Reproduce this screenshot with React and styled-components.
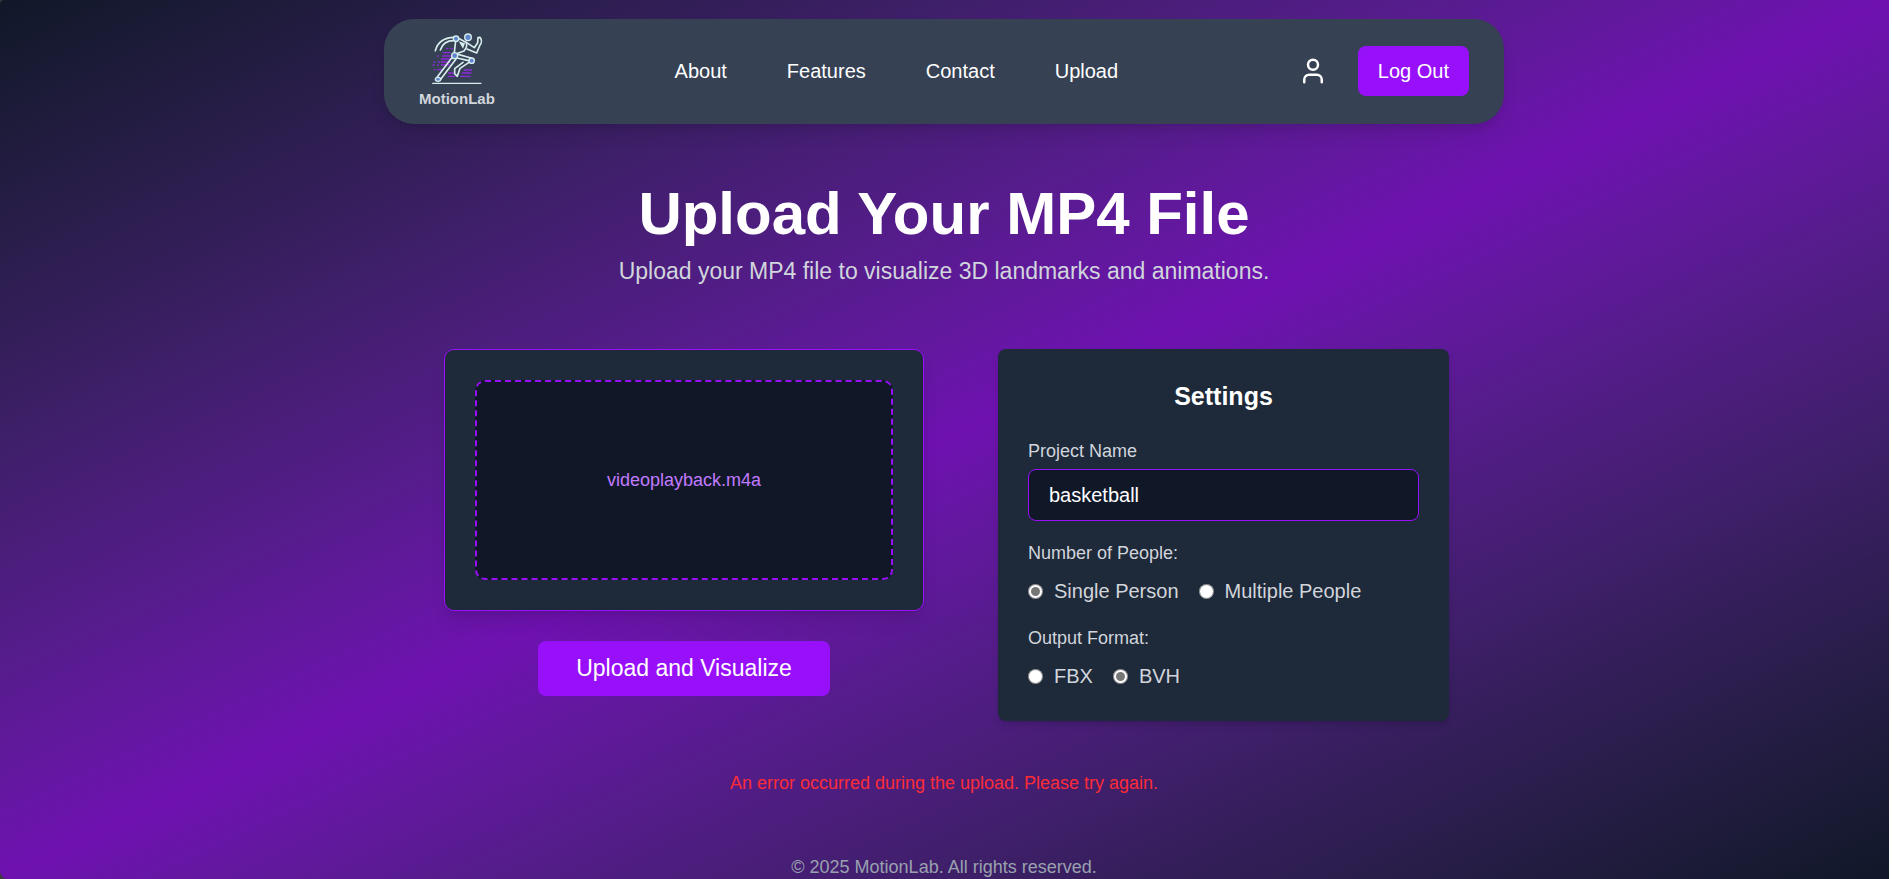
import React, { useState } from "react";
import styled, { createGlobalStyle } from "styled-components";
import { User } from "lucide-react";

const GlobalStyle = createGlobalStyle`
  *, *::before, *::after { box-sizing: border-box; }
  body {
    margin: 0;
    background: #ffffff;
    color: #ffffff;
    font-family: "Liberation Sans", Arial, sans-serif;
    font-size: 20px;
    line-height: 30px;
  }
  h1, h2, p, fieldset { margin: 0; padding: 0; border: 0; }
  button, input { font: inherit; color: inherit; }
  a { color: inherit; text-decoration: none; }
`;

const Frame = styled.div`
  margin-right: 3px;
  background: #3c3c3c;
`;

const Page = styled.div`
  display: flex;
  flex-direction: column;
  min-height: 100vh;
  padding: 19px 1px 0 0;
  border-radius: 4px 0 0 8px;
  background: linear-gradient(to bottom right in oklab, #101828, #6e11b0, #101828);
`;

const Header = styled.header`
  display: flex;
  align-items: center;
  justify-content: space-between;
  width: 100%;
  max-width: 1120px;
  height: 105px;
  margin: 0 auto;
  padding: 0 35px 1px;
  border-radius: 30px;
  background: #364153;
  box-shadow: 0 12px 18px -4px rgba(0, 0, 0, 0.1), 0 5px 8px -5px rgba(0, 0, 0, 0.1);
`;

const Brand = styled.a`
  display: flex;
  flex-direction: column;
  align-items: center;
  gap: 4px;
  color: #d1d5dc;
  font-size: 15px;
  font-weight: 700;
  line-height: 20px;
`;

const Nav = styled.nav`
  display: flex;
  gap: 60px;
`;

const Account = styled.div`
  display: flex;
  align-items: center;
  gap: 30px;
`;

const IconLink = styled.a`
  display: flex;
`;

const Button = styled.button`
  padding: ${(p) => (p.$large ? "12px 38px 13px" : "10px 20px")};
  border: 0;
  border-radius: 8px;
  background: #9810fa;
  font-size: ${(p) => (p.$large ? 23 : 20)}px;
  line-height: 30px;
  cursor: pointer;
`;

const Main = styled.main`
  width: 100%;
  max-width: 1120px;
  margin: 0 auto;
  padding-top: 60px;
`;

const Intro = styled.section`
  text-align: center;
`;

const Title = styled.h1`
  font-size: 60px;
  font-weight: 700;
  line-height: 60px;
`;

const Subtitle = styled.p`
  padding-top: 10px;
  color: #d1d5dc;
  font-size: 23px;
  line-height: 35px;
`;

const Columns = styled.form`
  display: grid;
  grid-template-columns: 5fr 4fr;
  padding: 60px 40px 0 0;
`;

const UploadColumn = styled.div`
  display: flex;
  flex-direction: column;
  align-items: center;
  gap: 30px;
`;

const DropCard = styled.div`
  width: 80%;
  padding: 30px;
  border: 1px solid #9810fa;
  border-radius: 10px;
  background: #1e2939;
  box-shadow: 0 12px 18px -4px rgba(0, 0, 0, 0.1), 0 5px 8px -5px rgba(0, 0, 0, 0.1);
`;

const DropZone = styled.label`
  display: flex;
  align-items: center;
  justify-content: center;
  height: 200px;
  border: 2px dashed #9810fa;
  border-radius: 10px;
  background: #101828;
  color: #c27aff;
  font-size: 18px;
  line-height: 25px;
  cursor: pointer;
`;

const FileInput = styled.input`
  display: none;
`;

const SettingsCard = styled.section`
  align-self: start;
  margin: 0 15px 0 14px;
  padding: 30px;
  border-radius: 8px;
  background: #1e2939;
  box-shadow: 0 5px 8px -1px rgba(0, 0, 0, 0.1), 0 3px 5px -2px rgba(0, 0, 0, 0.1);
`;

const SettingsTitle = styled.h2`
  padding-bottom: 25px;
  font-size: 25px;
  line-height: 35px;
  text-align: center;
`;

const Fields = styled.div`
  display: flex;
  flex-direction: column;
  gap: 20px;
`;

const Field = styled.div`
  color: #d1d5dc;
`;

const FieldName = styled.label`
  display: block;
  padding-bottom: 5px;
  font-size: 18px;
  line-height: 25px;
`;

const TextInput = styled.input`
  display: block;
  width: 100%;
  height: 52px;
  padding: 0 20px;
  border: 1px solid #9810fa;
  border-radius: 8px;
  outline: 0;
  background: #101828;
  color: #ffffff;
`;

const Choices = styled.div`
  display: flex;
  gap: 20px;
  padding-top: 5px;
`;

const Choice = styled.label`
  display: flex;
  align-items: center;
  gap: 11px;
`;

const Radio = styled.input`
  width: 15px;
  height: 15px;
  margin: 0;
  accent-color: #767676;
`;

const ErrorText = styled.p`
  padding-top: 50px;
  color: #fb2c36;
  font-size: 18px;
  line-height: 25px;
  text-align: center;
`;

const Footer = styled.footer`
  padding-top: 60px;
  color: #99a1af;
  font-size: 18px;
  line-height: 22px;
  text-align: center;
`;

function RunnerLogo() {
  return (
    <svg width="52" height="52" viewBox="150 68 156 156" fill="none" strokeLinecap="round" strokeLinejoin="round" aria-hidden="true">
      <g stroke="#8f2be0" strokeWidth="4">
        <path d="M197 115h4M210 115h4M187 127h20M170 137h2M185 137h24M181 146h26M159 155h2M172 155h3M181 155h26M156 164h3M170 164h2M181 164h24M160 178h2M171 178h12M250 179h22M244 188h26M203 188h14M201 198h20M239 198h28" />
      </g>
      <g stroke="#d8eeee" strokeWidth="5">
        <path d="M155 219h145" strokeWidth="4" />
        <path d="M219 81C192 82 170 94 163 121M218 91C198 91 184 100 178 119" />
        <path d="M231 83L253 95M224 92L220 126M254 94C260 102 257 112 249 122L230 129" />
        <path d="M257 97L280 112L290 97L291 82L297 81C303 88 302 98 297 104L287 128L258 116" />
        <path d="M231 132L270 143M229 143L262 151M212 143L167 202M225 146L178 208M264 156L237 174L229 198L221 190L221 175L246 156" />
      </g>
      <path d="M233 93L252 99L246 115Z" fill="#d8eeee" />
      <g fill="#5f86cf" stroke="#d8eeee" strokeWidth="4">
        <circle cx="261" cy="81" r="10" />
        <circle cx="225" cy="85" r="8" />
        <circle cx="221" cy="136" r="9" />
        <circle cx="272" cy="151" r="8" />
        <ellipse cx="171" cy="207" rx="8" ry="6" />
      </g>
    </svg>
  );
}

function RadioGroup({ title, name, options, value, onChange }) {
  return (
    <Field role="radiogroup" aria-labelledby={`${name}-title`}>
      <FieldName as="div" id={`${name}-title`}>{title}</FieldName>
      <Choices>
        {options.map((option) => (
          <Choice key={option}>
            <Radio type="radio" name={name} checked={value === option} onChange={() => onChange(option)} />
            {option}
          </Choice>
        ))}
      </Choices>
    </Field>
  );
}

export default function App() {
  const [project, setProject] = useState("basketball");
  const [people, setPeople] = useState("Single Person");
  const [format, setFormat] = useState("BVH");

  return (
    <Frame>
      <GlobalStyle />
      <Page>
        <Header>
          <Brand href="#home">
            <RunnerLogo />
            MotionLab
          </Brand>
          <Nav>
            {["About", "Features", "Contact", "Upload"].map((item) => (
              <a key={item} href={`#${item.toLowerCase()}`}>{item}</a>
            ))}
          </Nav>
          <Account>
            <IconLink href="#profile" aria-label="Profile">
              <User size={30} />
            </IconLink>
            <Button type="button">Log Out</Button>
          </Account>
        </Header>

        <Main>
          <Intro>
            <Title>Upload Your MP4 File</Title>
            <Subtitle>Upload your MP4 file to visualize 3D landmarks and animations.</Subtitle>
          </Intro>

          <Columns onSubmit={(e) => e.preventDefault()}>
            <UploadColumn>
              <DropCard>
                <DropZone>
                  videoplayback.m4a
                  <FileInput type="file" />
                </DropZone>
              </DropCard>
              <Button type="submit" $large>Upload and Visualize</Button>
            </UploadColumn>

            <SettingsCard>
              <SettingsTitle>Settings</SettingsTitle>
              <Fields>
                <Field>
                  <FieldName htmlFor="project">Project Name</FieldName>
                  <TextInput id="project" type="text" value={project} onChange={(e) => setProject(e.target.value)} />
                </Field>
                <RadioGroup title="Number of People:" name="people" options={["Single Person", "Multiple People"]} value={people} onChange={setPeople} />
                <RadioGroup title="Output Format:" name="format" options={["FBX", "BVH"]} value={format} onChange={setFormat} />
              </Fields>
            </SettingsCard>
          </Columns>

          <ErrorText role="alert">An error occurred during the upload. Please try again.</ErrorText>
        </Main>

        <Footer>© 2025 MotionLab. All rights reserved.</Footer>
      </Page>
    </Frame>
  );
}
